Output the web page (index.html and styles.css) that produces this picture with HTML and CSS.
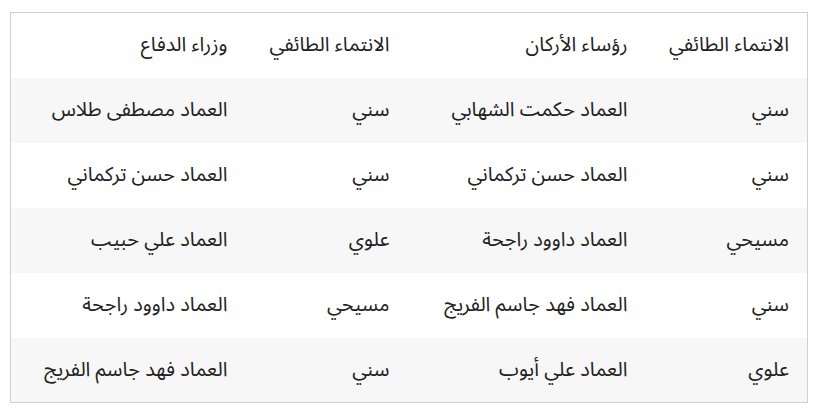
FILE: index.html
```html
<!DOCTYPE html>
<html lang="ar" dir="rtl">
<head>
<meta charset="utf-8">
<link rel="stylesheet" href="styles.css">
</head>
<body>
<div class="wrap">
<table class="tbl">
<colgroup>
<col class="c-sect">
<col class="c-name">
<col class="c-sect">
<col class="c-name2">
</colgroup>
<thead>
<tr><th>الانتماء الطائفي</th><th>رؤساء الأركان</th><th>الانتماء الطائفي</th><th>وزراء الدفاع</th></tr>
</thead>
<tbody>
<tr><td>سني</td><td>العماد حكمت الشهابي</td><td>سني</td><td>العماد مصطفى طلاس</td></tr>
<tr><td>سني</td><td>العماد حسن تركماني</td><td>سني</td><td>العماد حسن تركماني</td></tr>
<tr><td>مسيحي</td><td>العماد داوود راجحة</td><td>علوي</td><td>العماد علي حبيب</td></tr>
<tr><td>سني</td><td>العماد فهد جاسم الفريج</td><td>مسيحي</td><td>العماد داوود راجحة</td></tr>
<tr><td>علوي</td><td>العماد علي أيوب</td><td>سني</td><td>العماد فهد جاسم الفريج</td></tr>
</tbody>
</table>
</div>
</body>
</html>
```
FILE: styles.css
```css
html, body { margin: 0; padding: 0; background: #fff; }
body { font-family: "Noto Sans Arabic", "Noto Sans", sans-serif; color: #222; }
.wrap { padding: 12px 12px 0 11px; }
.tbl {
  width: 798px;
  border-collapse: collapse;
  table-layout: fixed;
  border: 1px solid #cfcfcf;
}
.c-sect { width: 162px; }
.c-name { width: 238px; }
.c-name2 { width: auto; }
.tbl th, .tbl td {
  height: 65px;
  padding: 0 18px;
  text-align: right;
  font-size: 20px;
  font-weight: 400;
  vertical-align: middle;
  box-sizing: border-box;
}
.tbl tbody tr:nth-child(odd) { background: #f7f7f7; }
```
